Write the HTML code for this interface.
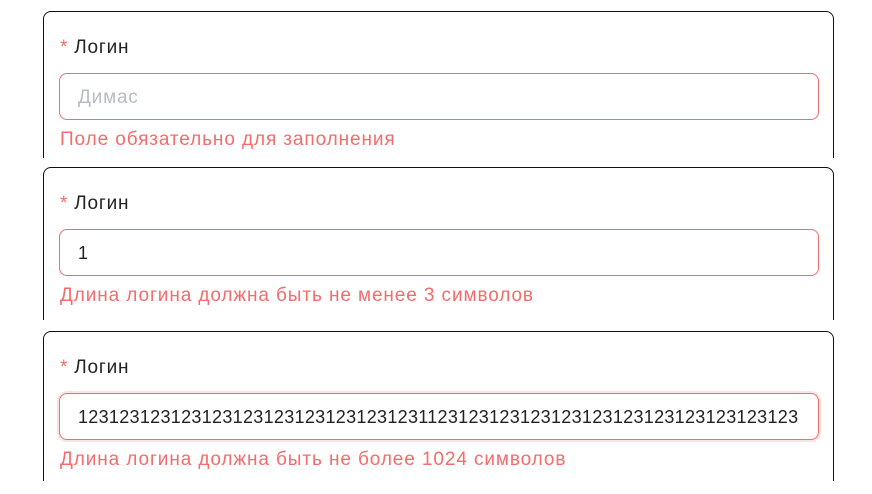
<!DOCTYPE html>
<html><head><meta charset="utf-8"><style>
body{margin:0;width:872px;height:494px;background:#fff;position:relative;overflow:hidden;font-family:"Liberation Sans","DejaVu Sans",sans-serif}
.card{position:absolute;left:43px;width:791px;border:1px solid #111;border-bottom:none;border-radius:8px 8px 0 0;overflow:hidden;box-sizing:border-box}
.lab{position:absolute;left:16px;top:24px;font-size:19px;color:#222;line-height:24px;letter-spacing:0.8px}
.lab b{color:#f56c6c;font-weight:normal;margin-right:6px}
.inp{position:absolute;left:15px;top:61px;width:760px;height:47px;border:1px solid #f56c6c;border-radius:8px;box-sizing:border-box;font-size:18px;line-height:47px;padding-left:18px;color:#222;white-space:nowrap;overflow:hidden}
.ph{color:#b8bcc4;font-size:19px;letter-spacing:0.8px}
.err{position:absolute;left:16px;top:116px;font-size:19px;color:#f56c6c;line-height:24px;white-space:nowrap;letter-spacing:0.9px}
</style></head><body>
<div class="card" style="top:11px;height:147px"><div class="lab"><b>*</b>Логин</div><div class="inp"><span class="ph">Димас</span></div><div class="err">Поле обязательно для заполнения</div></div>
<div class="card" style="top:167px;height:153px"><div class="lab"><b>*</b>Логин</div><div class="inp">1</div><div class="err">Длина логина должна быть не менее 3 символов</div></div>
<div class="card" style="top:331px;height:150px"><div class="lab"><b>*</b>Логин</div><div class="inp" style="box-shadow:0 0 0 2px #fde2e2;letter-spacing:0.3px">1231231231231231231231231231231231123123123123123123123123123123123123</div><div class="err">Длина логина должна быть не более 1024 символов</div></div>
</body></html>
